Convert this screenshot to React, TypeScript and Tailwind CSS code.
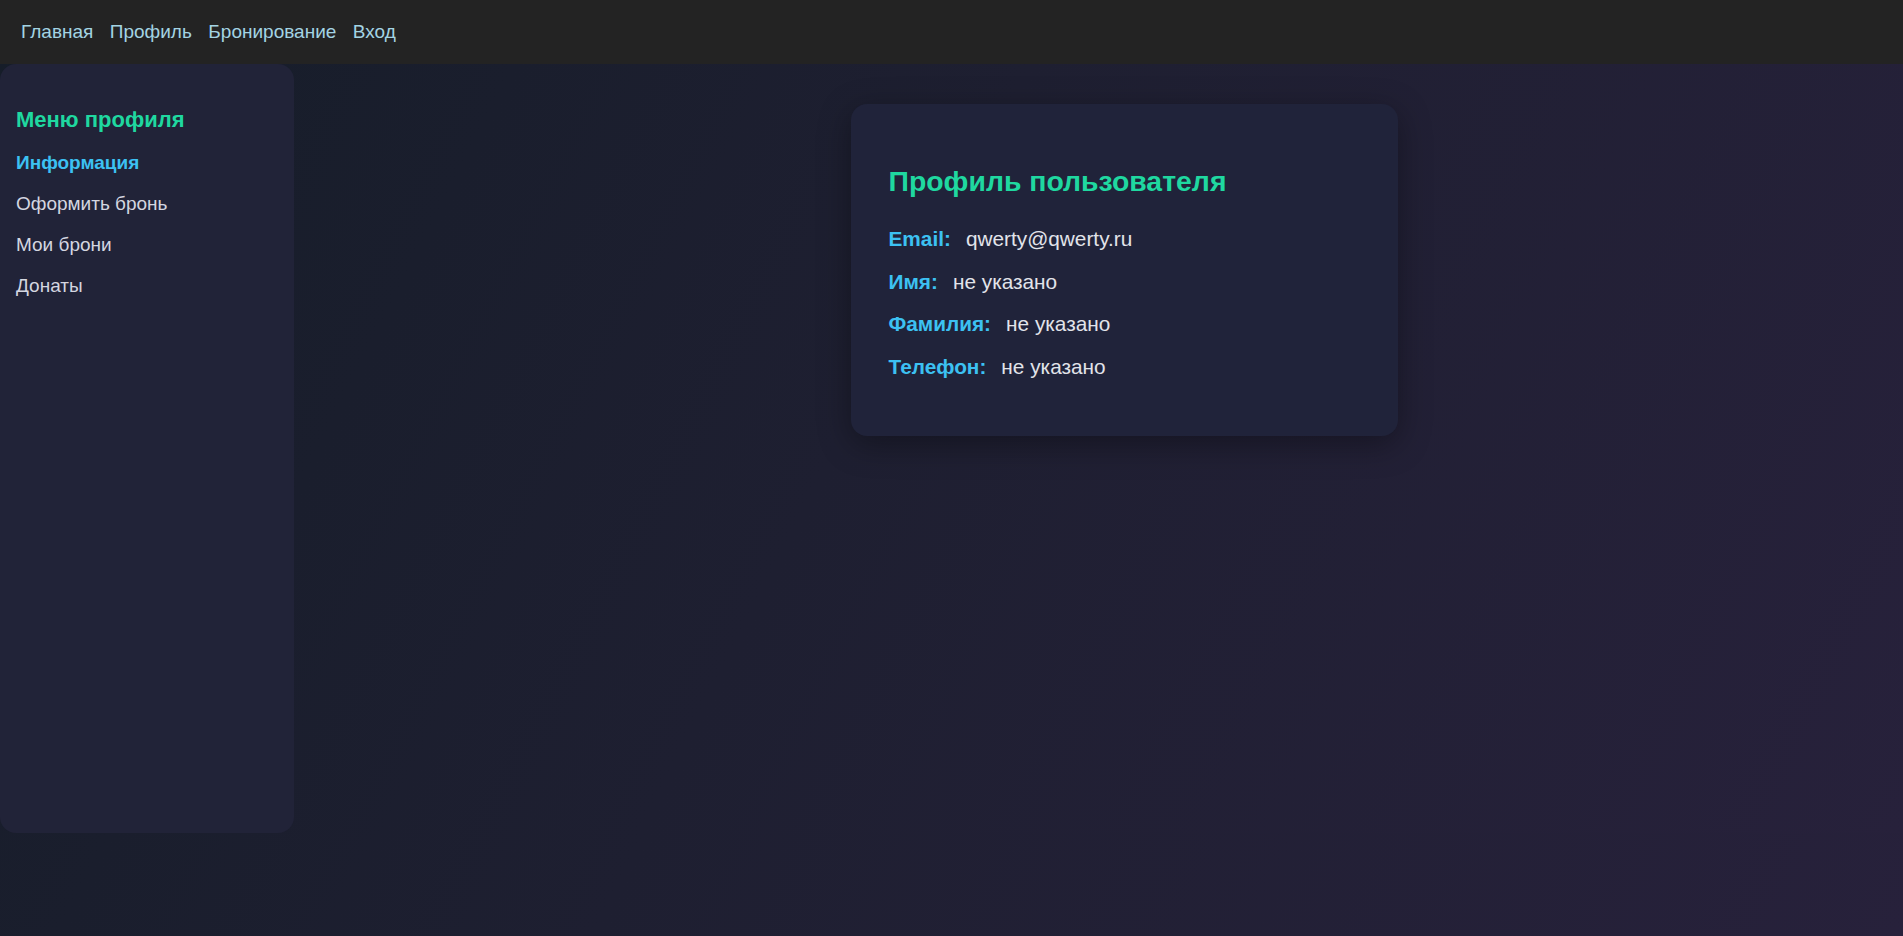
import React from "react";

const font = { fontFamily: '"Liberation Sans", Arial, sans-serif' };

export default function App() {
  const rows: [string, string][] = [
    ["Email:", "qwerty@qwerty.ru"],
    ["Имя:", "не указано"],
    ["Фамилия:", "не указано"],
    ["Телефон:", "не указано"],
  ];
  return (
    <div
      className="min-h-screen bg-[linear-gradient(117deg,#161d29_0%,#1e1f31_45%,#27213b_100%)] font-['Liberation_Sans',Arial,sans-serif]"
      style={font}
    >
      <nav className="h-16 bg-[#232323] flex items-center pl-[21px] gap-[16.5px] text-[19px] text-[#a3d4e3]">
        <a href="#">Главная</a>
        <a href="#">Профиль</a>
        <a href="#">Бронирование</a>
        <a href="#">Вход</a>
      </nav>
      <div className="h-[769px] flex bg-[linear-gradient(117deg,#161d29_0%,#1e1f31_45%,#27213b_100%)]">
        <aside className="w-[294px] h-full rounded-2xl bg-[#212338] px-4 pt-[42px] flex flex-col">
          <h3 className="text-[22px] leading-[28px] font-bold text-[#1fd8a0] mb-[17px]">Меню профиля</h3>
          <ul className="flex flex-col gap-[17px]">
            <li className="text-[19px] leading-[24px] font-bold text-[#3cc1f2]">Информация</li>
            <li className="text-[19px] leading-[24px] text-[#d4d6e0]">Оформить бронь</li>
            <li className="text-[19px] leading-[24px] text-[#d4d6e0]">Мои брони</li>
            <li className="text-[19px] leading-[24px] text-[#d4d6e0]">Донаты</li>
          </ul>
        </aside>
        <main className="flex-1 flex justify-center pl-[51px] pt-[40px]">
          <div className="w-[547px] h-[332px] rounded-2xl bg-[#20233a] shadow-[0_8px_32px_rgba(0,0,0,0.35)] pl-[38px] pr-[37px] pt-[60px]">
            <h2 className="text-[28.4px] leading-[34px] font-bold text-[#1fd8a0] mb-[28px]">Профиль пользователя</h2>
            <div className="flex flex-col gap-[17.5px]">
              {rows.map(([k, v]) => (
                <div key={k} className="text-[20.8px] leading-[25px]">
                  <span className="font-bold text-[#3cc1f2] mr-[15px]">{k}</span>
                  <span className="text-[#e2e4ea]">{v}</span>
                </div>
              ))}
            </div>
          </div>
        </main>
      </div>
    </div>
  );
}
